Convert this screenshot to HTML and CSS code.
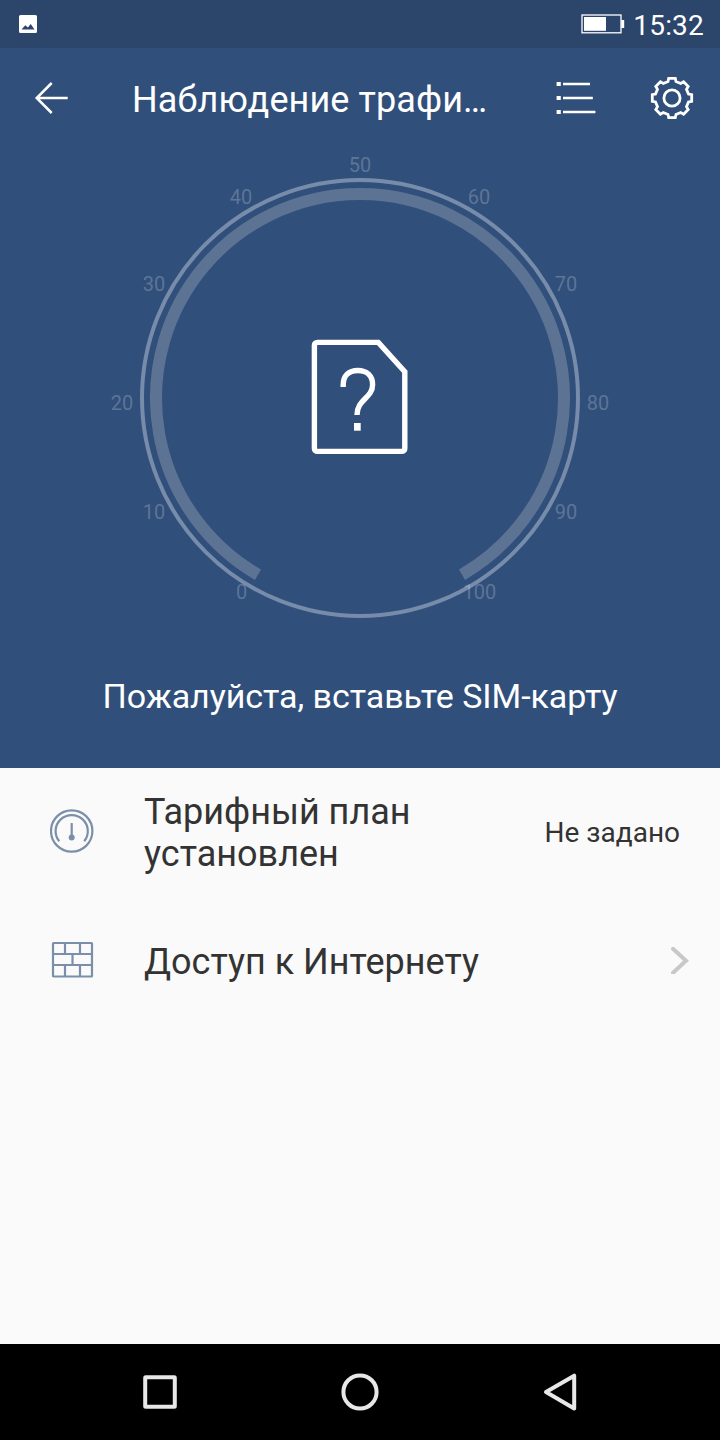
FILE: index.html
```
<!DOCTYPE html>
<html lang="ru">
<head>
  <meta charset="UTF-8">
  <meta name="viewport" content="width=device-width, initial-scale=1.0">
  <title>Наблюдение трафика</title>
  <link rel="stylesheet" href="styles.css">
</head>
<body>
  <div class="screen">
    <div class="status-bar">
      <svg class="status-image" width="18" height="18" viewBox="0 0 18 18">
        <path fill="#fff" fill-rule="evenodd" d="M1.500 0h15A1.500 1.500 0 0 1 18 1.500v15a1.500 1.500 0 0 1-1.500 1.500h-15A1.500 1.500 0 0 1 0 16.500v-15A1.500 1.500 0 0 1 1.500 0zM2.500 14.600h13l-3.800-5.600-2.800 3.600-2.600-2.300z"/>
      </svg>
      <svg class="battery" width="44" height="20" viewBox="0 0 44 20">
        <rect x="1" y="1" width="39" height="17.800" fill="none" stroke="#fff" stroke-width="1.300"/>
        <rect x="3" y="3" width="22" height="13.800" fill="#fff"/>
        <rect x="40.200" y="6" width="3" height="8" fill="#fff"/>
      </svg>
      <span class="clock">15:32</span>
    </div>

    <header class="app-bar">
      <button class="icon-button back" aria-label="Назад">
        <svg width="34" height="34" viewBox="0 0 34 34">
          <path d="M17.700 2 2.700 17l15 15M2.700 17h31" fill="none" stroke="#fff" stroke-width="2.500"/>
        </svg>
      </button>
      <h1>Наблюдение трафи…</h1>
      <button class="icon-button list" aria-label="Список">
        <svg width="40" height="34" viewBox="0 0 40 34">
          <path d="M.6 1h4.200v4H.6zM.6 15h4.200v4H.6zM.6 29h4.200v4H.6z" fill="#fff"/>
          <path d="M7 3h27M7 17h29.800M7 31h32.400" stroke="#fff" stroke-width="2.400"/>
        </svg>
      </button>
      <button class="icon-button gear" aria-label="Настройки">
        <svg width="44" height="44" viewBox="-22 -22 44 44">
          <g fill="none" stroke="#fff" stroke-width="2.800">
            <path d="M-3.300-19.700H3.300L4-16.500 8.700-14.500 11.600-16.200 16.200-11.600 14.500-8.700 16.500-4 19.700-3.300V3.300L16.500 4 14.500 8.700 16.200 11.600 11.600 16.200 8.700 14.500 4 16.500 3.300 19.700H-3.300L-4 16.500-8.700 14.500-11.600 16.200-16.200 11.600-14.500 8.700-16.500 4-19.700 3.300V-3.300L-16.500-4-14.500-8.700-16.200-11.600-11.600-16.200-8.700-14.500-4-16.500z"/>
            <circle r="8.100"/>
          </g>
        </svg>
      </button>
    </header>

    <section class="summary">
      <svg class="gauge" width="520" height="480" viewBox="100 148 520 480">
        <circle class="gauge-ring" cx="360" cy="398" r="218"/>
        <path class="gauge-track" d="M258 574.7A204 204 0 1 1 462 574.7"/>
        <g class="gauge-labels">
          <text x="241.5" y="599">0</text>
          <text x="154" y="519">10</text>
          <text x="122" y="410">20</text>
          <text x="154" y="291">30</text>
          <text x="241" y="204">40</text>
          <text x="360" y="172">50</text>
          <text x="479" y="204">60</text>
          <text x="566" y="291">70</text>
          <text x="598" y="410">80</text>
          <text x="566" y="519">90</text>
          <text x="479.5" y="599">100</text>
        </g>
        <g class="sim">
          <path d="M317 342.4h61.3l26.500 29.400v76.600a3 3 0 0 1-3 3H317.400a3 3 0 0 1-3-3V345.400a3 3 0 0 1 3-3z"/>
          <path d="M343.200 387v-2c0-9.300 5.600-14.500 14.600-14.500s14.800 5.300 14.800 14.200c0 13.500-15.600 14.500-15.600 30.300"/>
          <path class="sim-dot" d="M354 423h6.700v7.700H354z"/>
        </g>
      </svg>
      <p class="message">Пожалуйста, вставьте SIM-карту</p>
    </section>

    <main class="options">
      <div class="option plan">
        <svg class="option-icon" width="44" height="44" viewBox="0 0 44 44">
          <circle cx="21.700" cy="22" r="20.700"/>
          <path d="M9.200 32.300A16.100 16.100 0 1 1 34.200 32.300M21.700 14v14"/>
          <circle class="filled" cx="21.700" cy="28.500" r="3"/>
        </svg>
        <span class="option-title">Тарифный план установлен</span>
        <span class="option-value">Не задано</span>
      </div>
      <div class="option">
        <svg class="option-icon" width="44" height="44" viewBox="0 0 44 44">
          <rect x="3" y="5" width="39" height="33.500" rx=".6"/>
          <path d="M3 16h39M3 27h39M15 5v11M30 5v11M22.500 16v11M15 27v11M30 27v11"/>
        </svg>
        <span class="option-title">Доступ к Интернету</span>
        <svg class="chevron" width="20" height="28" viewBox="0 0 20 28">
          <path d="M3 2.800l13 12L3 26.800"/>
        </svg>
      </div>
    </main>

    <nav class="nav-bar">
      <svg width="40" height="40" viewBox="0 0 40 40"><rect x="5.200" y="5.200" width="29.600" height="29.600" rx=".5"/></svg>
      <svg width="40" height="40" viewBox="0 0 40 40"><circle cx="20" cy="20" r="16.600"/></svg>
      <svg width="40" height="40" viewBox="0 0 40 40"><path d="M34.200 3.700v32.800L6 20z"/></svg>
    </nav>
  </div>
</body>
</html>
```

FILE: styles.css
```
* {
  box-sizing: border-box;
}

body {
  margin: 0;
  font-family: Roboto, "Noto Sans", sans-serif;
  background: #fafafa;
}

.screen {
  display: flex;
  flex-direction: column;
  width: 720px;
  height: 1440px;
  overflow: hidden;
}

.status-bar {
  display: flex;
  align-items: center;
  height: 48px;
  padding: 0 16px 0 19px;
  background: #2c456b;
  color: #fff;
}

.battery {
  margin-left: auto;
  margin-right: 8px;
}

.clock {
  font-size: 28px;
  line-height: 44px;
  padding-top: 4px;
  letter-spacing: 0.2px;
}

.app-bar {
  display: flex;
  align-items: center;
  height: 100px;
  padding: 0 26px 0 34px;
  background: #314f7b;
  color: #fff;
}

.app-bar h1 {
  margin: 4px 0 0 64px;
  font-size: 36px;
  font-weight: 400;
  line-height: 44px;
  letter-spacing: 0.1px;
  white-space: nowrap;
}

.icon-button {
  display: flex;
  padding: 0;
  border: none;
  background: none;
}

.list {
  margin-left: auto;
}

.gear {
  margin-left: 54px;
}

.summary {
  display: flex;
  flex-direction: column;
  align-items: center;
  height: 620px;
  background: #314f7b;
}

.gauge-ring {
  fill: none;
  stroke: #778baa;
  stroke-width: 4;
}

.gauge-track {
  fill: none;
  stroke: #5d7394;
  stroke-width: 12;
}

.gauge-labels {
  font-size: 20px;
  text-anchor: middle;
  fill: rgba(255, 255, 255, 0.22);
}

.sim {
  fill: none;
  stroke: #fff;
  stroke-width: 5.4;
}

.sim-dot {
  fill: #fff;
  stroke: none;
}

.message {
  margin: 48px 0 0;
  color: #fff;
  font-size: 34px;
  line-height: 40px;
  letter-spacing: -0.05px;
}

.options {
  flex: 1;
  background: #fafafa;
}

.option {
  display: flex;
  align-items: center;
  height: 128px;
  padding: 0 30px 0 50px;
  color: #333;
}

.plan {
  padding-bottom: 2px;
}

.option-icon {
  flex: none;
  fill: none;
  stroke: #7b90a8;
  stroke-width: 2.2;
}

.option-icon .filled {
  fill: #7b90a8;
  stroke: none;
}

.option-title {
  width: 360px;
  margin: 4px 0 0 50px;
  font-size: 36px;
  line-height: 42px;
}

.option-value {
  margin: 2px 10px 0 auto;
  font-size: 28px;
}

.chevron {
  margin-left: auto;
  fill: none;
  stroke: #c8c8c8;
  stroke-width: 4;
  stroke-linecap: round;
}

.nav-bar {
  display: flex;
  justify-content: space-between;
  align-items: center;
  height: 96px;
  padding: 0 140px;
  background: #000;
}

.nav-bar svg {
  fill: none;
  stroke: #e8e8e8;
  stroke-width: 4;
  stroke-linejoin: round;
}
```
